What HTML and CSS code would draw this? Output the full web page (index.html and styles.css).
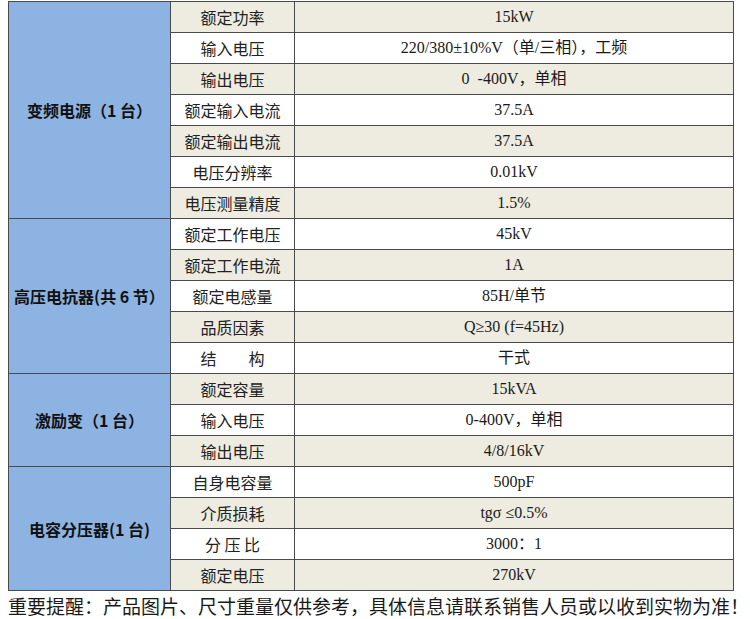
FILE: index.html
```html
<!DOCTYPE html>
<html lang="zh">
<head>
<meta charset="utf-8">
<link rel="stylesheet" href="styles.css">
</head>
<body>
<table class="spec">
  <colgroup><col class="c1"><col class="c2"><col class="c3"></colgroup>
  <tbody>
    <tr class="alt"><th rowspan="7">变频电源（1 台）</th><td>额定功率</td><td>15kW</td></tr>
    <tr><td>输入电压</td><td>220/380±10%V（单/三相），工频</td></tr>
    <tr class="alt"><td>输出电压</td><td>0&nbsp; -400V，单相</td></tr>
    <tr><td>额定输入电流</td><td>37.5A</td></tr>
    <tr class="alt"><td>额定输出电流</td><td>37.5A</td></tr>
    <tr><td>电压分辨率</td><td>0.01kV</td></tr>
    <tr class="alt"><td>电压测量精度</td><td>1.5%</td></tr>
    <tr><th rowspan="5">高压电抗器(共 6 节）</th><td>额定工作电压</td><td>45kV</td></tr>
    <tr class="alt"><td>额定工作电流</td><td>1A</td></tr>
    <tr><td>额定电感量</td><td>85H/单节</td></tr>
    <tr class="alt"><td>品质因素</td><td>Q≥30 (f=45Hz)</td></tr>
    <tr><td>结　　构</td><td>干式</td></tr>
    <tr class="alt"><th rowspan="3">激励变（1 台）</th><td>额定容量</td><td>15kVA</td></tr>
    <tr><td>输入电压</td><td>0-400V，单相</td></tr>
    <tr class="alt"><td>输出电压</td><td>4/8/16kV</td></tr>
    <tr><th rowspan="4">电容分压器(1 台)</th><td>自身电容量</td><td>500pF</td></tr>
    <tr class="alt"><td>介质损耗</td><td>tgσ ≤0.5%</td></tr>
    <tr><td>分 压 比</td><td>3000：1</td></tr>
    <tr class="alt"><td>额定电压</td><td>270kV</td></tr>
  </tbody>
</table>
<p class="note">重要提醒：产品图片、尺寸重量仅供参考，具体信息请联系销售人员或以收到实物为准！</p>
</body>
</html>
```

FILE: styles.css
```css
html, body {
  margin: 0;
  padding: 0;
  background: #ffffff;
}
body {
  padding: 1px 4px 0 8px;
  font-family: "Liberation Serif", "Noto Sans CJK SC", serif;
  color: #1a1a1a;
}
.spec {
  border-collapse: collapse;
  width: 725px;
  table-layout: fixed;
  border: 1px solid #4a4a4a;
}
.c1 { width: 162px; }
.c2 { width: 124px; }
.c3 { width: 439px; }
.spec td, .spec th {
  border: 1px solid #4a4a4a;
  height: 30px;
  box-sizing: border-box;
  padding: 0;
  text-align: center;
  vertical-align: middle;
  font-size: 16px;
  line-height: 20px;
  white-space: nowrap;
}
.spec tr { height: 31px; background: #ffffff; }
.spec tr.alt { background: #eeece1; }
.spec th {
  background: #8db3e2;
  font-family: "Noto Sans CJK SC", sans-serif;
  font-weight: 700;
  font-size: 16px;
  color: #111;
}
.spec td:first-of-type {
  font-family: "Noto Sans CJK SC", serif;
  font-weight: 400;
  color: #222;
}
.note {
  margin: 3px 0 0;
  font-family: "Noto Sans CJK SC", sans-serif;
  font-size: 19px;
  line-height: 24px;
  color: #1a1a1a;
  white-space: nowrap;
}
```
